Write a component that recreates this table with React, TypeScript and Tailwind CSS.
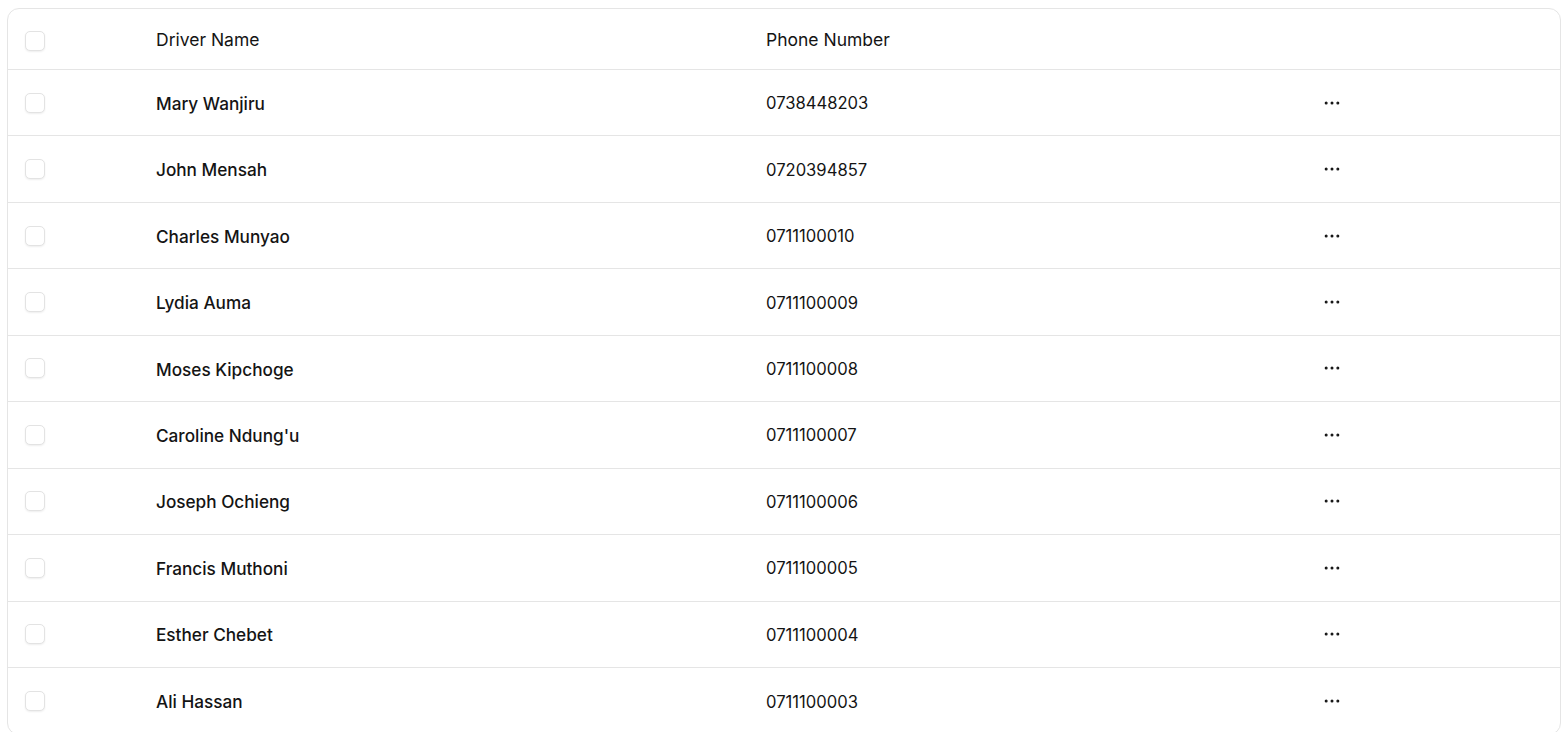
import { Ellipsis } from "lucide-react";

const drivers = [
  { name: "Mary Wanjiru", phone: "0738448203" },
  { name: "John Mensah", phone: "0720394857" },
  { name: "Charles Munyao", phone: "0711100010" },
  { name: "Lydia Auma", phone: "0711100009" },
  { name: "Moses Kipchoge", phone: "0711100008" },
  { name: "Caroline Ndung'u", phone: "0711100007" },
  { name: "Joseph Ochieng", phone: "0711100006" },
  { name: "Francis Muthoni", phone: "0711100005" },
  { name: "Esther Chebet", phone: "0711100004" },
  { name: "Ali Hassan", phone: "0711100003" },
];

const cols = "grid grid-cols-[132px_610px_560px_1fr] items-center";

function Checkbox() {
  return <span className="block h-5 w-5 rounded-[5px] border border-[#e3e3e3] bg-white shadow-[0_1px_2px_rgba(0,0,0,0.07)]" />;
}

export default function App() {
  return (
    <div className="min-h-screen bg-white px-[7px] pt-[8px] font-['Inter',sans-serif] text-[#141414]">
      <div className="overflow-hidden rounded-xl border border-[#e5e5e5] bg-white">
        <div className={`${cols} h-[61px] border-b border-[#e5e5e5]`}>
          <div className="pl-[17px] pt-[3px]">
            <Checkbox />
          </div>
          <div className="pl-4 pt-[3px] text-[17.5px]">Driver Name</div>
          <div className="pl-4 pt-[3px] text-[17.5px]">Phone Number</div>
          <div />
        </div>
        {drivers.map((d, i) => (
          <div key={d.phone} className={`${cols} h-[66.44px] ${i < drivers.length - 1 ? "border-b border-[#e5e5e5]" : ""}`}>
            <div className="pl-[17px]">
              <Checkbox />
            </div>
            <div className="pl-4 pt-[2px] text-[17.2px] font-medium">{d.name}</div>
            <div className="pl-4 pt-[2px] text-[16.6px]">{d.phone}</div>
            <div className="pl-[12px]">
              <Ellipsis size={20} strokeWidth={1.6} />
            </div>
          </div>
        ))}
      </div>
    </div>
  );
}
